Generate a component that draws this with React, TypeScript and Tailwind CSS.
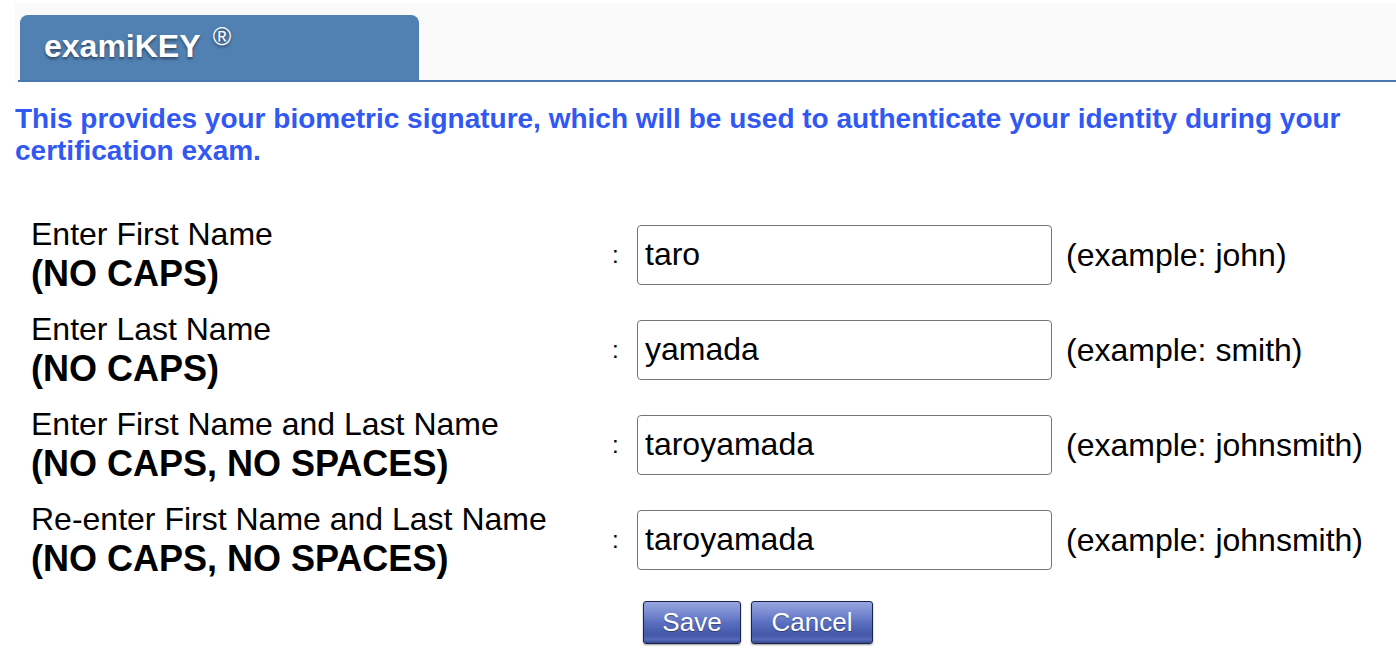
import React from "react";

type Row = {
  label: string;
  hint: string;
  value: string;
  example: string;
};

const rows: Row[] = [
  { label: "Enter First Name", hint: "(NO CAPS)", value: "taro", example: "(example: john)" },
  { label: "Enter Last Name", hint: "(NO CAPS)", value: "yamada", example: "(example: smith)" },
  {
    label: "Enter First Name and Last Name",
    hint: "(NO CAPS, NO SPACES)",
    value: "taroyamada",
    example: "(example: johnsmith)",
  },
  {
    label: "Re-enter First Name and Last Name",
    hint: "(NO CAPS, NO SPACES)",
    value: "taroyamada",
    example: "(example: johnsmith)",
  },
];

function FormRow({ row }: { row: Row }) {
  return (
    <div className="flex h-[95px] items-center">
      <div className="w-[612px] shrink-0 pl-[31px] text-black">
        <div className="text-[32px] leading-[37px]">{row.label}</div>
        <div className="text-[36px] font-bold leading-[41px]">{row.hint}</div>
      </div>
      <div className="w-[25px] shrink-0 text-[24px] text-black">:</div>
      <input
        defaultValue={row.value}
        className="h-[60px] w-[415px] shrink-0 rounded-[4px] border border-[#767676] bg-white pl-[7px] text-[32px] text-black outline-none"
      />
      <div className="ml-[14px] whitespace-nowrap text-[32px] text-black">{row.example}</div>
    </div>
  );
}

function BlueButton({ children, width }: { children: React.ReactNode; width: string }) {
  return (
    <button
      className={`${width} h-[43px] rounded-[3px] border border-[#1b2447] bg-[linear-gradient(to_bottom,#97a7e0_0%,#7587d0_30%,#5a6fc0_50%,#4458aa_80%,#5669b6_92%,#33468f_100%)] text-[26px] text-white shadow-[0_1px_2px_rgba(0,0,0,0.4)] [text-shadow:0_1px_1px_rgba(0,0,0,0.35)]`}
    >
      {children}
    </button>
  );
}

export default function App() {
  return (
    <div className="h-[664px] w-full overflow-hidden bg-white font-['Liberation_Sans',Arial,sans-serif]">
      <div className="pl-[15px] pt-[3px]">
        <div className="bg-[#fafafa] pl-[3px] pt-[12px]">
          <div className="pl-[2px]">
            <div className="h-[65px] w-[399px] rounded-t-[8px] bg-[#5180b2] pl-[24px] pt-[13px] text-[32px] font-bold leading-[37px] text-white [text-shadow:0_2px_3px_rgba(0,0,0,0.45)]">
              examiKEY{" "}
              <span className="relative -top-[12px] ml-[4px] text-[25px] font-normal">®</span>
            </div>
          </div>
          <div className="h-[2px] bg-[#4a78ad]" />
        </div>
      </div>

      <p className="mt-[21px] px-[15px] text-[28px] font-bold leading-[32px] text-[#3158f2]">
        This provides your biometric signature, which will be used to authenticate your identity during your
        certification exam.
      </p>

      <div className="mt-[40px]">
        {rows.map((row, i) => (
          <FormRow key={i} row={row} />
        ))}
      </div>

      <div className="mt-[14px] flex gap-[10px] pl-[643px]">
        <BlueButton width="w-[98px]">Save</BlueButton>
        <BlueButton width="w-[122px]">Cancel</BlueButton>
      </div>
    </div>
  );
}
